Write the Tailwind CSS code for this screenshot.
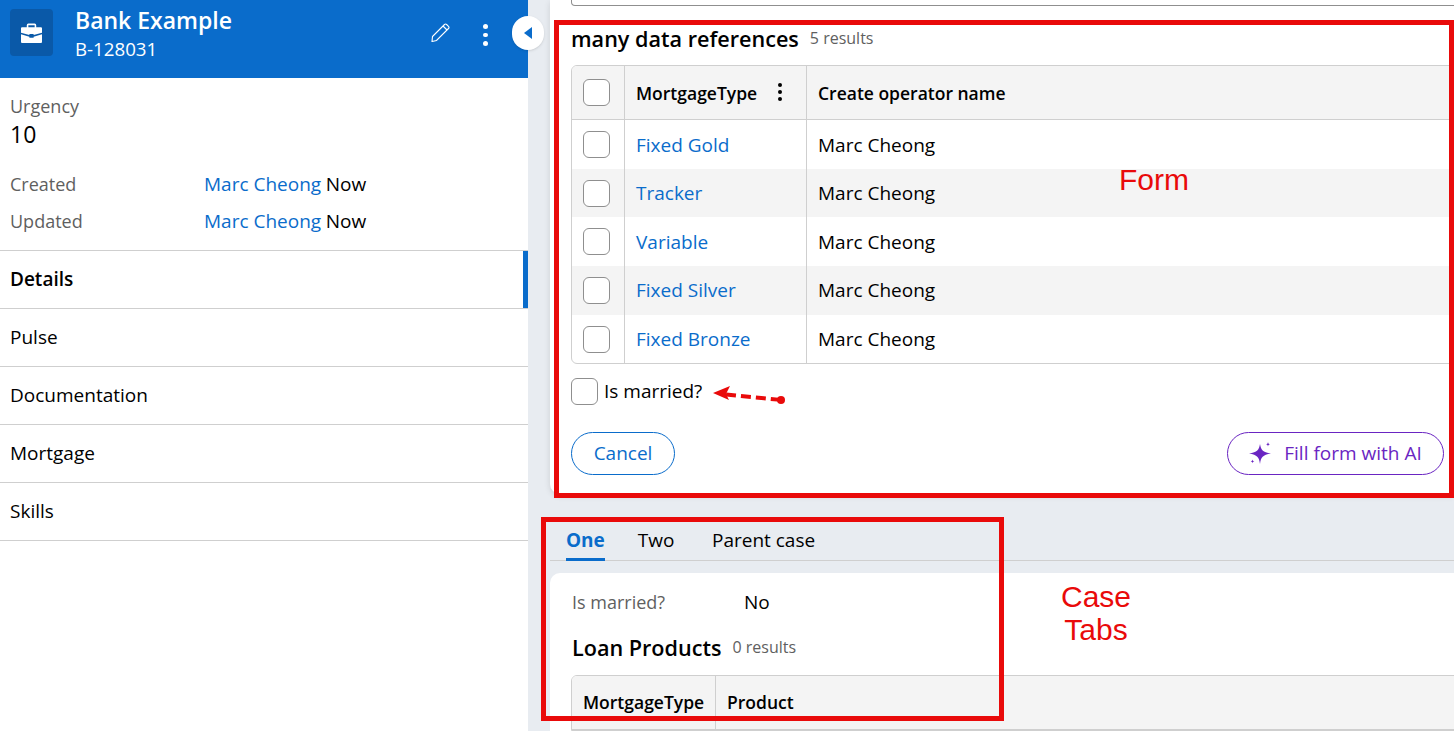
<!DOCTYPE html>
<html lang="en">
<head>
    <meta charset="UTF-8">
    <title>Bank Example</title>
    <script src="https://cdn.jsdelivr.net/npm/@tailwindcss/browser@4"></script>
</head>
<body class="font-['Open_Sans',sans-serif] text-black">
<div class="relative flex w-[1454px] h-[731px] overflow-hidden bg-[#e8ecf1]">

    <!-- CASE SUMMARY PANEL -->
    <aside class="w-[528px] h-full bg-white shrink-0">
        <div class="relative flex items-start h-[78px] bg-[#0a6ccb] text-white pl-[10px] pt-[9px]">
            <div class="w-[43px] h-[47px] rounded-[4px] bg-[#0a59a8] flex items-center justify-center">
                <svg width="21" height="20" viewBox="0 0 20 19" fill="white"><path d="M7 0.500h6a1.500 1.500 0 0 1 1.500 1.500v2H19a1 1 0 0 1 1 1v4.200l-8 2.200v-1h-4v1L0 9.200V5a1 1 0 0 1 1-1h4.500V2A1.500 1.500 0 0 1 7 0.500zM7 2v2h6V2zM0 10.800l8 2.200v1h4v-1l8-2.200V18a1 1 0 0 1-1 1H1a1 1 0 0 1-1-1z"/></svg>
            </div>
            <div class="ml-[22px] -mt-[1px]">
                <div class="text-[23px] leading-[24px] font-semibold">Bank Example</div>
                <div class="text-[18.700px] leading-[24px] mt-[5px]">B-128031</div>
            </div>
            <svg class="absolute left-[431px] top-[22px]" width="20" height="20" viewBox="0 0 20 20" fill="none" stroke="white" stroke-width="1.100"><path d="M1.500 14.500 13.500 2.500a1.500 1.500 0 0 1 2.100 0l1.900 1.900a1.500 1.500 0 0 1 0 2.100L5.500 18.500l-4.500 1z"/><path d="M12 4l4 4"/></svg>
            <div class="absolute left-[483px] top-[24px] flex flex-col gap-[4px]">
                <span class="block w-[4.500px] h-[4.500px] rounded-full bg-white"></span>
                <span class="block w-[4.500px] h-[4.500px] rounded-full bg-white"></span>
                <span class="block w-[4.500px] h-[4.500px] rounded-full bg-white"></span>
            </div>
            <div class="absolute left-[512px] top-[16px] w-[32px] h-[34px] rounded-full bg-white flex items-center justify-center z-10 shadow-sm">
                <svg width="8" height="12" viewBox="0 0 8 12" fill="#0a6ccb"><path d="M8 0v12L0 6z"/></svg>
            </div>
        </div>

        <div class="px-[10px] pt-[16px]">
            <div class="text-[18px] leading-[24px] text-[#5f5f5f]">Urgency</div>
            <div class="text-[23px] leading-[30px] pt-[1px]">10</div>
            <div class="flex mt-[20px] h-[37px] text-[19px] leading-[30px]">
                <span class="w-[194px] text-[18px] text-[#5f5f5f]">Created</span>
                <span class="text-[#0a6ccb]">Marc Cheong</span><span class="ml-[4.500px]">Now</span>
            </div>
            <div class="flex h-[28px] text-[19px] leading-[30px]">
                <span class="w-[194px] text-[18px] text-[#5f5f5f]">Updated</span>
                <span class="text-[#0a6ccb]">Marc Cheong</span><span class="ml-[4.500px]">Now</span>
            </div>
        </div>

        <nav class="mt-[16px] border-t border-[#cfcfcf] text-[19px]">
            <div class="relative h-[58px] border-b border-[#cfcfcf] px-[10px] flex items-center font-semibold">
                Details
                <span class="absolute right-0 top-0 w-[5px] h-full bg-[#0a6ccb]"></span>
            </div>
            <div class="h-[58px] border-b border-[#cfcfcf] px-[10px] flex items-center">Pulse</div>
            <div class="h-[58px] border-b border-[#cfcfcf] px-[10px] flex items-center">Documentation</div>
            <div class="h-[58px] border-b border-[#cfcfcf] px-[10px] flex items-center">Mortgage</div>
            <div class="h-[58px] border-b border-[#cfcfcf] px-[10px] flex items-center">Skills</div>
        </nav>
    </aside>

    <!-- WORK AREA -->
    <main class="flex-1 min-w-0 pl-[22px]">
        <section class="h-[494px] bg-white rounded-bl-[10px] pl-[21px] shadow-[0_2px_6px_rgba(0,0,0,0.12)]">
            <div class="h-[6px] border border-t-0 border-[#8f8f8f] rounded-b-[4px] mr-[-20px]"></div>
            <div class="flex items-start mt-[19px] h-[28px]">
                <h2 class="text-[21.600px] leading-[28px] font-semibold">many data references</h2>
                <span class="ml-[11px] text-[16px] leading-[26px] text-[#5f5f5f]">5 results</span>
            </div>

            <div class="mt-[12px] mr-[-20px] border border-[#cfcfcf] rounded-[6px] overflow-hidden">
                <div class="flex h-[54px] bg-[#f4f4f4] border-b border-[#cfcfcf] text-[17.500px] font-semibold">
                    <div class="w-[53px] border-r border-[#cfcfcf] flex items-center pl-[11px]">
                        <span class="w-[27px] h-[27px] rounded-[6px] border border-[#8f8f8f] bg-white"></span>
                    </div>
                    <div class="relative w-[182px] border-r border-[#cfcfcf] flex items-center pl-[11px] pt-[1px]">
                        MortgageType
                        <div class="absolute left-[153px] top-[17px] flex flex-col gap-[3px]">
                            <span class="block w-[4px] h-[4px] rounded-full bg-black"></span>
                            <span class="block w-[4px] h-[4px] rounded-full bg-black"></span>
                            <span class="block w-[4px] h-[4px] rounded-full bg-black"></span>
                        </div>
                    </div>
                    <div class="flex items-center pl-[11px] pt-[1px]">Create operator name</div>
                </div>
                <div class="flex h-[49px] text-[19px]">
                    <div class="w-[53px] border-r border-[#cfcfcf] flex items-center pl-[11px]"><span class="w-[27px] h-[27px] rounded-[6px] border border-[#8f8f8f] bg-white"></span></div>
                    <div class="w-[182px] border-r border-[#cfcfcf] flex items-center pl-[11px] pt-[1px] text-[#0a6ccb]">Fixed Gold</div>
                    <div class="flex items-center pl-[11px] pt-[1px]">Marc Cheong</div>
                </div>
                <div class="flex h-[48px] text-[19px] bg-[#f4f4f4]">
                    <div class="w-[53px] border-r border-[#cfcfcf] flex items-center pl-[11px]"><span class="w-[27px] h-[27px] rounded-[6px] border border-[#8f8f8f] bg-white"></span></div>
                    <div class="w-[182px] border-r border-[#cfcfcf] flex items-center pl-[11px] text-[#0a6ccb]">Tracker</div>
                    <div class="flex items-center pl-[11px]">Marc Cheong</div>
                </div>
                <div class="flex h-[49px] text-[19px]">
                    <div class="w-[53px] border-r border-[#cfcfcf] flex items-center pl-[11px]"><span class="w-[27px] h-[27px] rounded-[6px] border border-[#8f8f8f] bg-white"></span></div>
                    <div class="w-[182px] border-r border-[#cfcfcf] flex items-center pl-[11px] pt-[1px] text-[#0a6ccb]">Variable</div>
                    <div class="flex items-center pl-[11px] pt-[1px]">Marc Cheong</div>
                </div>
                <div class="flex h-[49px] text-[19px] bg-[#f4f4f4]">
                    <div class="w-[53px] border-r border-[#cfcfcf] flex items-center pl-[11px]"><span class="w-[27px] h-[27px] rounded-[6px] border border-[#8f8f8f] bg-white"></span></div>
                    <div class="w-[182px] border-r border-[#cfcfcf] flex items-center pl-[11px] text-[#0a6ccb]">Fixed Silver</div>
                    <div class="flex items-center pl-[11px]">Marc Cheong</div>
                </div>
                <div class="flex h-[48px] text-[19px]">
                    <div class="w-[53px] border-r border-[#cfcfcf] flex items-center pl-[11px]"><span class="w-[27px] h-[27px] rounded-[6px] border border-[#8f8f8f] bg-white"></span></div>
                    <div class="w-[182px] border-r border-[#cfcfcf] flex items-center pl-[11px] text-[#0a6ccb]">Fixed Bronze</div>
                    <div class="flex items-center pl-[11px]">Marc Cheong</div>
                </div>
            </div>

            <div class="flex items-center mt-[14px] text-[19px] leading-[24px]">
                <span class="w-[27px] h-[27px] rounded-[6px] border border-[#8f8f8f] bg-white"></span>
                <span class="ml-[6px] -mt-[2px]">Is married?</span>
            </div>

            <div class="flex justify-between mt-[27px] pr-[10px]">
                <button class="w-[104px] h-[43px] rounded-full border border-[#0a6ccb] text-[#0a6ccb] text-[19px]">Cancel</button>
                <button class="w-[217px] h-[43px] rounded-full border border-[#6a25c2] text-[#6a25c2] text-[19px] flex items-center justify-center gap-[12px]">
                    <svg width="23" height="23" viewBox="0 0 23 23" fill="#6a25c2"><path d="M11 2C12 8 13.500 10 22 11.500 13.500 13 12 15 11 22 10 15 8.500 13 0 11.500 8.500 10 10 8 11 2z"/><path d="M19 0c.2 1.500.8 2.100 2 2.300-1.200.2-1.800.8-2 2.300-.2-1.500-.8-2.100-2-2.300 1.200-.2 1.800-.8 2-2.300z"/><path d="M3.500 17.500c.2 1.300.6 1.700 1.800 1.900-1.200.2-1.600.6-1.800 1.900-.2-1.300-.6-1.700-1.800-1.900 1.200-.2 1.600-.6 1.800-1.900z"/></svg>
                    Fill form with AI
                </button>
            </div>
        </section>

        <!-- CASE TABS -->
        <div class="mt-[22px] h-[45px] border-b border-[#cfcfcf] flex pl-[16px] text-[19px]">
            <div class="h-[45px] border-b-[3px] border-[#0a6ccb] text-[#0a6ccb] font-bold leading-[48px]">One</div>
            <div class="ml-[33px] leading-[48px]">Two</div>
            <div class="ml-[37.500px] leading-[48px]">Parent case</div>
        </div>
        <section class="mt-[12px] h-[160px] bg-white rounded-tl-[10px] pl-[22px] overflow-hidden">
            <div class="flex pt-[16px] h-[50px] items-start">
                <span class="w-[172px] text-[18px] leading-[26px] text-[#5f5f5f]">Is married?</span>
                <span class="text-[19px] leading-[26px]">No</span>
            </div>
            <div class="flex items-start mt-[11px] h-[28px]">
                <h2 class="text-[21.600px] leading-[28px] font-semibold">Loan Products</h2>
                <span class="ml-[11px] text-[16px] leading-[26px] text-[#5f5f5f]">0 results</span>
            </div>
            <div class="mt-[13px] -ml-[1px] mr-[-20px] border border-[#cfcfcf] rounded-t-[6px] overflow-hidden">
                <div class="flex h-[54px] bg-[#f4f4f4] border-b border-[#cfcfcf] text-[17.500px] font-semibold">
                    <div class="w-[144px] border-r border-[#cfcfcf] flex items-center pl-[11px]">MortgageType</div>
                    <div class="flex items-center pl-[11px]">Product</div>
                </div>
            </div>
        </section>
    </main>

    <!-- ANNOTATIONS OVER THE SCREENSHOT -->
    <div class="absolute left-[554px] top-[20px] w-[900px] h-[478px] border-[5px] border-[#e90a0a]"></div>
    <div class="absolute left-[541px] top-[517px] w-[463px] h-[204px] border-[5px] border-[#e90a0a]"></div>
    <div class="absolute left-[1119px] top-[163px] font-['Liberation_Sans',sans-serif] text-[30px] leading-[34px] text-[#e90a0a]">Form</div>
    <div class="absolute left-[1040px] top-[580px] w-[112px] text-center font-['Liberation_Sans',sans-serif] text-[30px] leading-[33px] text-[#e90a0a]">Case<br>Tabs</div>
    <svg class="absolute left-[710px] top-[385px]" width="78" height="22" viewBox="0 0 78 22" fill="none">
        <path d="M16 9.500 72 15" stroke="#e90a0a" stroke-width="4" stroke-dasharray="10 5"/>
        <path d="M3 8 20 1 16 9 19 15z" fill="#e90a0a"/>
        <circle cx="71" cy="15" r="4" fill="#e90a0a"/>
    </svg>
</div>
</body>
</html>
